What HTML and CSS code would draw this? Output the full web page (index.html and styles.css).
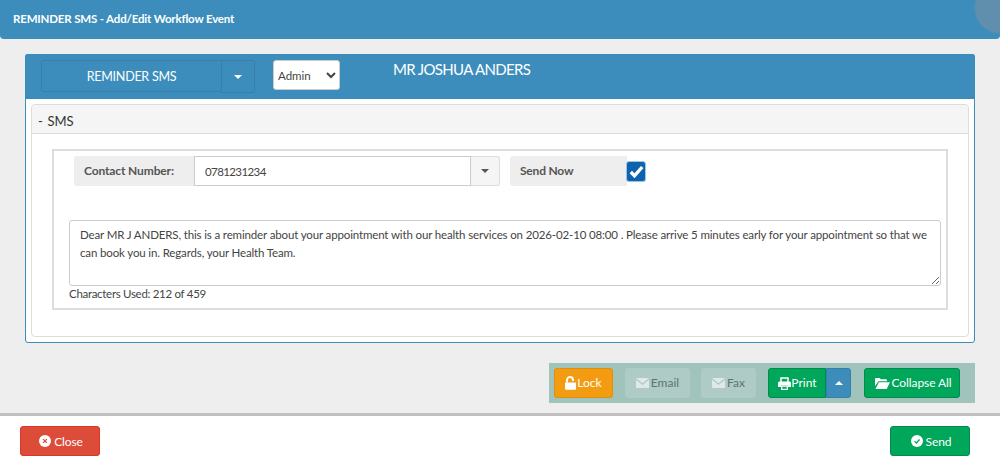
FILE: index.html
```html
<!DOCTYPE html>
<html lang="en">
<head>
    <meta charset="UTF-8">
    <meta name="viewport" content="width=device-width, initial-scale=1.0">
    <title>REMINDER SMS - Add/Edit Workflow Event</title>
    <link rel="stylesheet" href="styles.css">
</head>
<body>

    <div class="modal-header">
        <h4>REMINDER SMS - Add/Edit Workflow Event</h4>
        <span class="header-circle"></span>
    </div>

    <div class="modal-body">
        <div class="box">
            <div class="box-head">
                <div class="btn-group">
                    <button class="type-btn">REMINDER SMS</button>
                    <button class="type-caret"><span class="caret"></span></button>
                </div>
                <select class="user-select">
                    <option>Admin</option>
                </select>
                <span class="patient-name">MR JOSHUA ANDERS</span>
            </div>

            <div class="box-body">
                <div class="panel">
                    <div class="panel-head">-&nbsp; SMS</div>
                    <div class="panel-body">
                        <div class="sms-frame">
                            <div class="contact-row">
                                <div class="input-group">
                                    <label class="addon">Contact Number:</label>
                                    <input class="contact-input" type="text" value="0781231234">
                                    <span class="addon-caret"><span class="caret dark"></span></span>
                                </div>
                                <div class="send-now">
                                    <span class="send-label">Send Now</span>
                                    <span class="check">
                                        <svg width="15" height="13" viewBox="0 0 15 13"><path d="M1.8 7l3.7 3.8L13.2 2" fill="none" stroke="#fff" stroke-width="3.4"/></svg>
                                    </span>
                                </div>
                            </div>
                            <textarea class="message">Dear MR J ANDERS, this is a reminder about your appointment with our health services on 2026-02-10 08:00 . Please arrive 5 minutes early for your appointment so that we can book you in. Regards, your Health Team.</textarea>
                            <div class="char-count">Characters Used: 212 of 459</div>
                        </div>
                    </div>
                </div>
            </div>
        </div>

        <div class="toolbar-wrap">
            <div class="toolbar">
                <button class="btn orange lock-btn">
                    <svg width="13" height="14" viewBox="0 0 13 14"><path d="M1 6.5h11v6.2a1 1 0 0 1-1 1H2a1 1 0 0 1-1-1z" fill="#fff"/><path d="M3 6.5V4a3 3 0 0 1 6 0v1" fill="none" stroke="#fff" stroke-width="1.8"/></svg><span class="btn-text">Lock</span>
                </button>
                <button class="btn disabled email-btn">
                    <svg width="13" height="10" viewBox="0 0 13 10"><path d="M0 0h13L6.5 5.2z" fill="#dfeae7"/><path d="M0 1.8V10h13V1.8L6.5 7z" fill="#dfeae7"/></svg><span class="btn-text">Email</span>
                </button>
                <button class="btn disabled fax-btn">
                    <svg width="13" height="10" viewBox="0 0 13 10"><path d="M0 0h13L6.5 5.2z" fill="#dfeae7"/><path d="M0 1.8V10h13V1.8L6.5 7z" fill="#dfeae7"/></svg><span class="btn-text">Fax</span>
                </button>
                <div class="print-group">
                    <button class="btn green print-btn">
                        <svg width="13" height="13" viewBox="0 0 13 13"><path d="M3 5V1h7v4" fill="none" stroke="#fff" stroke-width="1.5"/><path d="M1.5 4.5h10a1.5 1.5 0 0 1 1.5 1.5v4h-3V8H3v2H0V6a1.500 1.500 0 0 1 1.500-1.500z" fill="#fff"/><path d="M3.700 9h5.600v3.300H3.700z" fill="none" stroke="#fff" stroke-width="1.300"/></svg><span class="btn-text">Print</span>
                    </button>
                    <button class="btn blue print-caret"><span class="caret up"></span></button>
                </div>
                <button class="btn green collapse-btn">
                    <svg width="15" height="12" viewBox="0 0 15 12"><path d="M0 2a1 1 0 0 1 1-1h3.500l1.300 1.300H11a1 1 0 0 1 1 1V4.300H3.500L0 9z" fill="#fff"/><path d="M3.900 5.200H15L11.700 12H0.500z" fill="#fff"/></svg><span class="btn-text">Collapse All</span>
                </button>
            </div>
        </div>
    </div>

    <div class="modal-footer">
        <button class="btn red footer-btn">
            <svg width="12" height="12" viewBox="0 0 13 13"><circle cx="6.500" cy="6.500" r="6.500" fill="#fff"/><path d="M4.500 4.500l4 4m0-4l-4 4" stroke="#dd4b39" stroke-width="1.400"/></svg>Close
        </button>
        <button class="btn green footer-btn">
            <svg width="12" height="12" viewBox="0 0 13 13"><circle cx="6.500" cy="6.500" r="6.500" fill="#fff"/><path d="M3.800 6.700l2 2 3.500-3.800" fill="none" stroke="#00a65a" stroke-width="1.300"/></svg>Send
        </button>
    </div>

</body>
</html>
```

FILE: styles.css
```css
* {
    box-sizing: border-box;
}
html, body {
    height: 100%;
}
body {
    margin: 0;
    height: 466px;
    overflow: hidden;
    background-color: #eeeeee;
    font-family: Lato, "Liberation Sans", sans-serif;
    font-size: 12px;
    color: #444;
    display: flex;
    flex-direction: column;
}
button {
    font-family: inherit;
}

/* top bar */
.modal-header {
    position: relative;
    height: 39px;
    background-color: #3c8dbc;
    border-radius: 0 0 4px 4px;
    overflow: hidden;
    padding-left: 13px;
    display: flex;
    align-items: center;
}
.modal-header h4 {
    margin: 0 0 2px;
    font-size: 11.5px;
    font-weight: 700;
    letter-spacing: -0.17px;
    color: #fff;
}
.header-circle {
    position: absolute;
    right: -25px;
    top: -17px;
    width: 50px;
    height: 50px;
    border-radius: 50%;
    background-color: #5f8fac;
    box-shadow: 0 0 3px #5f8fac;
}

.modal-body {
    flex: 1;
    padding: 15px 25px 0;
}

/* main box */
.box {
    height: 289px;
    background-color: #fff;
    border: 1px solid #3c8dbc;
    border-radius: 3px;
    display: flex;
    flex-direction: column;
}
.box-head {
    height: 45px;
    flex-shrink: 0;
    margin: -1px -1px 0;
    padding: 6px 0 0 16px;
    background-color: #3c8dbc;
    border-radius: 3px 3px 0 0;
    display: flex;
    align-items: flex-start;
}
.btn-group {
    display: flex;
}
.type-btn {
    width: 181px;
    height: 32px;
    background-color: #3c8dbc;
    border: 1px solid #367fa9;
    border-radius: 3px 0 0 3px;
    color: #fff;
    font-size: 12.5px;
    letter-spacing: -0.25px;
}
.type-caret {
    width: 34px;
    height: 33px;
    margin-left: -1px;
    background-color: #3c8dbc;
    border: 1px solid #367fa9;
    border-radius: 0 3px 3px 0;
    display: flex;
    align-items: center;
    justify-content: center;
    padding: 0;
}
.caret {
    width: 0;
    height: 0;
    border-left: 4px solid transparent;
    border-right: 4px solid transparent;
    border-top: 4px solid #fff;
}
.caret.dark {
    border-top-color: #555;
}
.caret.up {
    border-top: 0;
    border-bottom: 4px solid #fff;
}
.user-select {
    width: 67px;
    height: 30px;
    margin-left: 18px;
    padding: 0;
    background-color: #fff;
    border: 1px solid #ccc;
    border-radius: 3px;
    font-family: inherit;
    font-size: 11.5px;
    color: #444;
}
.patient-name {
    margin: 0 0 0 53px;
    font-size: 15px;
    line-height: 18px;
    letter-spacing: -0.65px;
    color: #fff;
}

.box-body {
    flex: 1;
    padding: 5px;
}
.panel {
    height: 233px;
    background-color: #fff;
    border: 1px solid #ddd;
    border-radius: 4px;
}
.panel-head {
    height: 29px;
    padding-left: 6px;
    background-color: #f5f5f5;
    border-bottom: 1px solid #ddd;
    border-radius: 4px 4px 0 0;
    font-size: 13px;
    line-height: 32px;
    word-spacing: -1px;
    color: #333;
}
.panel-body {
    padding: 15px 20px 0;
}
.sms-frame {
    height: 161px;
    border: 2px solid #ddd;
    padding: 5px 5px 0 15px;
}

/* contact row */
.contact-row {
    display: flex;
    height: 30px;
    padding-left: 5px;
}
.input-group {
    display: flex;
    width: 426px;
}
.addon {
    width: 120px;
    background-color: #eee;
    border-radius: 3px 0 0 3px;
    padding-left: 10px;
    font-size: 12px;
    font-weight: 700;
    line-height: 30px;
    letter-spacing: -0.13px;
    color: #555;
}
.contact-input {
    flex: 1;
    min-width: 0;
    height: 30px;
    border: 1px solid #ccc;
    padding: 0 10px;
    font-family: inherit;
    font-size: 11.5px;
    letter-spacing: -0.6px;
    color: #444;
    outline: none;
}
.addon-caret {
    width: 29px;
    background-color: #f5f5f5;
    border: 1px solid #ddd;
    border-left: 0;
    border-radius: 0 3px 3px 0;
    display: flex;
    align-items: center;
    justify-content: center;
}
.send-now {
    position: relative;
    width: 117px;
    margin-left: 10px;
    background-color: #eee;
    border-radius: 3px 0 0 3px;
}
.send-label {
    padding-left: 10px;
    font-size: 12px;
    font-weight: 700;
    line-height: 30px;
    letter-spacing: -0.2px;
    color: #555;
}
.check {
    position: absolute;
    right: -19px;
    top: 5px;
    width: 20px;
    height: 21px;
    background-color: #0f62ae;
    border: 1px solid #9cc4e4;
    border-radius: 3px;
    display: flex;
    align-items: center;
    justify-content: center;
}

/* message */
.message {
    display: block;
    width: 872px;
    height: 66px;
    margin-top: 34px;
    padding: 5px 10px;
    background-color: #fff;
    border: 1px solid #ccc;
    border-radius: 3px;
    font-family: inherit;
    font-size: 11.5px;
    line-height: 18px;
    letter-spacing: -0.14px;
    color: #444;
    outline: none;
}
.char-count {
    font-size: 11.5px;
    line-height: 16px;
    letter-spacing: -0.3px;
    color: #444;
}

/* toolbar */
.toolbar-wrap {
    display: flex;
    justify-content: flex-end;
    margin-top: 20px;
}
.toolbar {
    width: 426px;
    height: 40px;
    padding: 5px;
    background-color: #a0c3bb;
    display: flex;
    align-items: center;
}
.btn {
    height: 30px;
    border: 1px solid transparent;
    border-radius: 3px;
    padding: 0;
    font-size: 12px;
    color: #fff;
    display: inline-flex;
    align-items: center;
    justify-content: center;
}
.btn-text {
    margin-top: -1px;
}
.btn.orange {
    background-color: #f39c12;
    border-color: #e08e0b;
}
.btn.green {
    background-color: #00a65a;
    border-color: #008d4c;
}
.btn.blue {
    background-color: #3c8dbc;
    border-color: #367fa9;
}
.btn.red {
    background-color: #dd4b39;
    border-color: #d73925;
}
.btn.disabled {
    background-color: #aecbc5;
    color: #5f7370;
}
.email-btn svg,
.fax-btn svg {
    margin-right: 2px;
}
.collapse-btn svg {
    margin-right: 2px;
}
.footer-btn {
    width: 80px;
    letter-spacing: -0.1px;
}
.footer-btn svg {
    margin-left: 2px;
    margin-right: 3px;
}
.lock-btn {
    width: 59px;
}
.lock-btn svg {
    margin-left: -1px;
}
.email-btn {
    width: 65px;
    margin-left: 12px;
}
.fax-btn {
    width: 55px;
    margin-left: 11px;
}
.print-group {
    display: flex;
    margin-left: 12px;
}
.print-btn {
    width: 58px;
    padding-left: 1px;
    border-radius: 3px 0 0 3px;
}
.print-caret {
    width: 25px;
    border-radius: 0 3px 3px 0;
}
.collapse-btn {
    width: 96px;
    margin-left: 13px;
    padding-left: 2px;
    letter-spacing: -0.1px;
}

/* footer */
.modal-footer {
    height: 53px;
    flex-shrink: 0;
    padding: 10px 30px 0 20px;
    background-color: #fff;
    border-top: 3px solid #c0c0c0;
    display: flex;
    justify-content: space-between;
    align-items: flex-start;
}
```
